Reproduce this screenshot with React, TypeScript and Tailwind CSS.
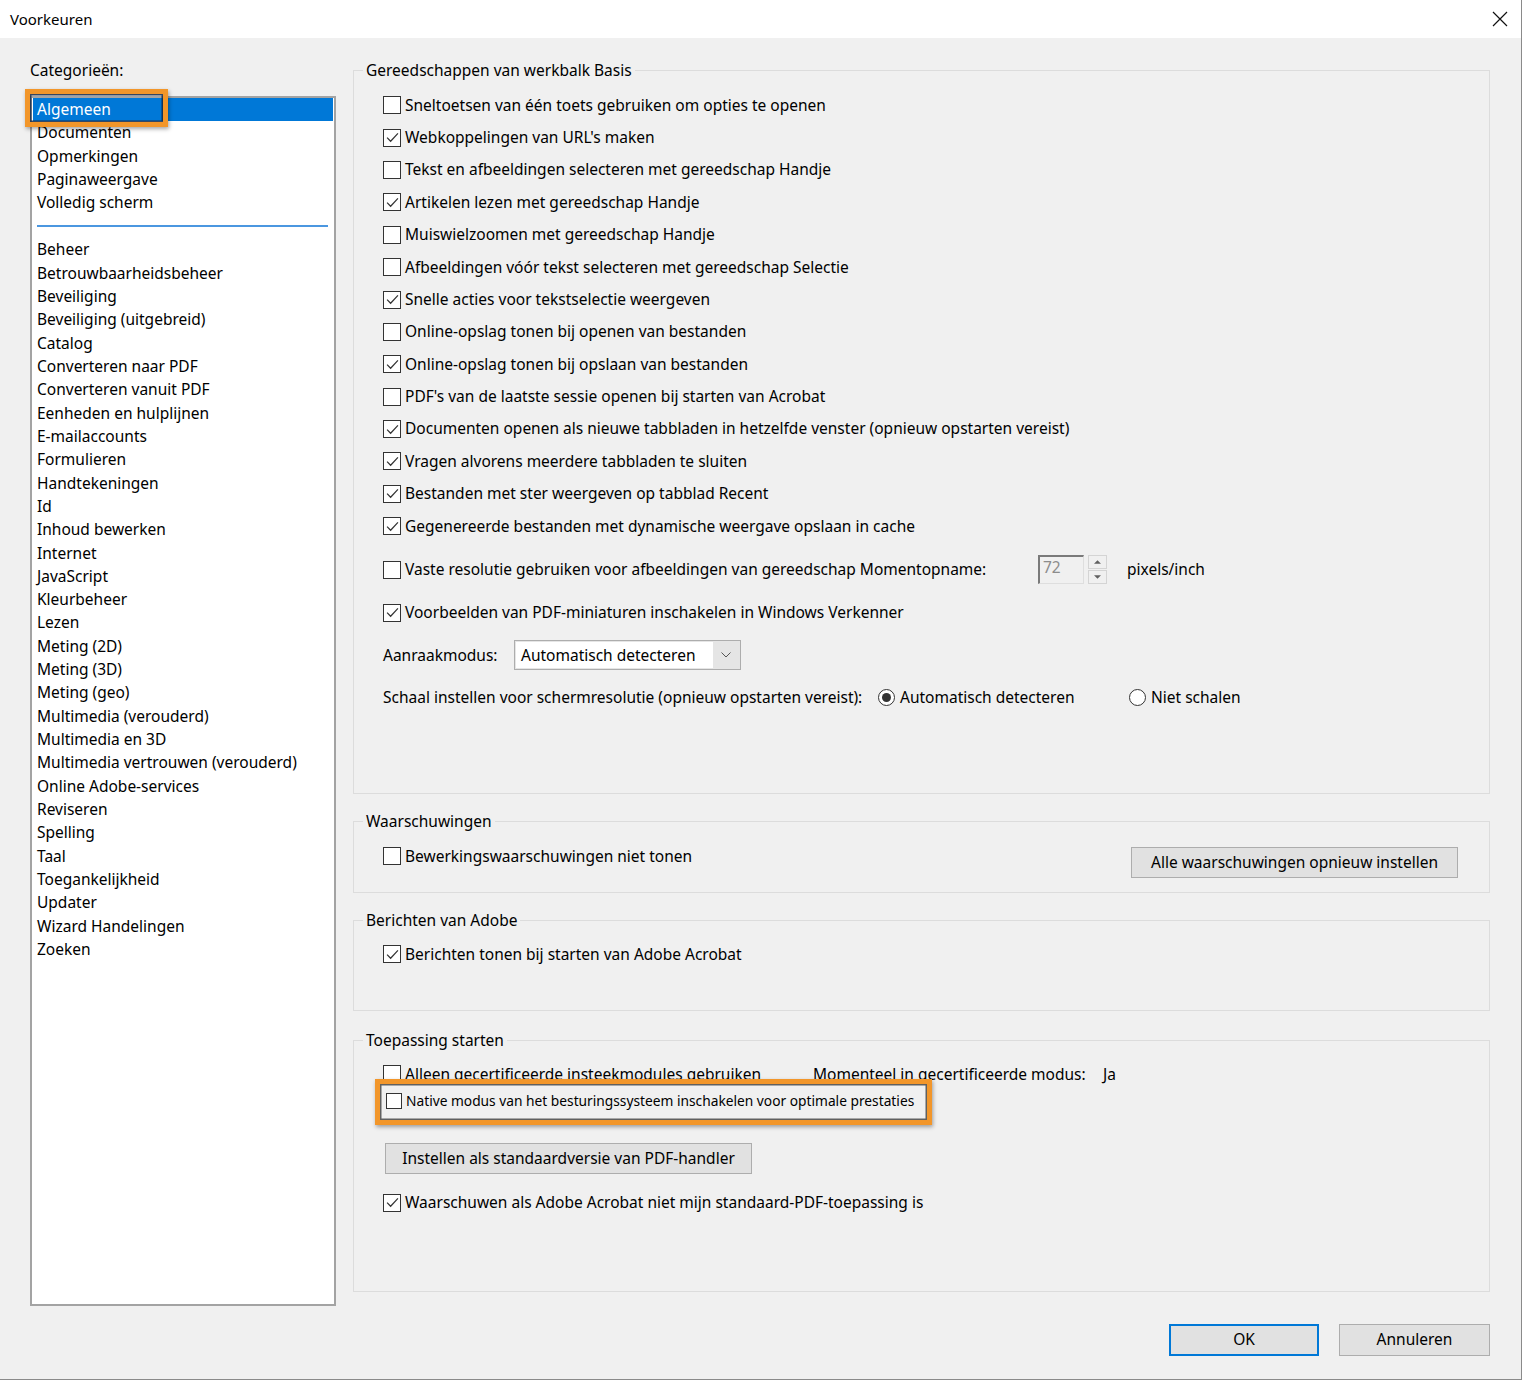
import React from "react";

const TOP_CATEGORIES = ["Algemeen", "Documenten", "Opmerkingen", "Paginaweergave", "Volledig scherm"];

const CATEGORIES = [
  "Beheer",
  "Betrouwbaarheidsbeheer",
  "Beveiliging",
  "Beveiliging (uitgebreid)",
  "Catalog",
  "Converteren naar PDF",
  "Converteren vanuit PDF",
  "Eenheden en hulplijnen",
  "E-mailaccounts",
  "Formulieren",
  "Handtekeningen",
  "Id",
  "Inhoud bewerken",
  "Internet",
  "JavaScript",
  "Kleurbeheer",
  "Lezen",
  "Meting (2D)",
  "Meting (3D)",
  "Meting (geo)",
  "Multimedia (verouderd)",
  "Multimedia en 3D",
  "Multimedia vertrouwen (verouderd)",
  "Online Adobe-services",
  "Reviseren",
  "Spelling",
  "Taal",
  "Toegankelijkheid",
  "Updater",
  "Wizard Handelingen",
  "Zoeken",
];

const BASIC_TOOLS: [string, boolean][] = [
  ["Sneltoetsen van één toets gebruiken om opties te openen", false],
  ["Webkoppelingen van URL's maken", true],
  ["Tekst en afbeeldingen selecteren met gereedschap Handje", false],
  ["Artikelen lezen met gereedschap Handje", true],
  ["Muiswielzoomen met gereedschap Handje", false],
  ["Afbeeldingen vóór tekst selecteren met gereedschap Selectie", false],
  ["Snelle acties voor tekstselectie weergeven", true],
  ["Online-opslag tonen bij openen van bestanden", false],
  ["Online-opslag tonen bij opslaan van bestanden", true],
  ["PDF's van de laatste sessie openen bij starten van Acrobat", false],
  ["Documenten openen als nieuwe tabbladen in hetzelfde venster (opnieuw opstarten vereist)", true],
  ["Vragen alvorens meerdere tabbladen te sluiten", true],
  ["Bestanden met ster weergeven op tabblad Recent", true],
  ["Gegenereerde bestanden met dynamische weergave opslaan in cache", true],
];

function CheckBox({ checked = false, small = false }: { checked?: boolean; small?: boolean }) {
  return (
    <span
      className={`${small ? "w-[16px] h-[16px]" : "w-[18px] h-[18px]"} shrink-0 border border-[#333] bg-white flex items-center justify-center`}
    >
      {checked && (
        <svg viewBox="0 0 16 16" className="w-[15px] h-[15px]">
          <path d="M2.2 8.2 L6 12 L13.8 3.6" fill="none" stroke="#333" strokeWidth="1.3" />
        </svg>
      )}
    </span>
  );
}

function CheckRow({ label, checked, className = "" }: { label: string; checked?: boolean; className?: string }) {
  return (
    <div className={`flex items-center gap-[4px] h-[32.4px] ${className}`}>
      <CheckBox checked={checked} />
      <span className="whitespace-nowrap">{label}</span>
    </div>
  );
}

function Radio({ selected = false, label }: { selected?: boolean; label: string }) {
  return (
    <div className="flex items-center gap-[5px]">
      <span className="w-[17px] h-[17px] rounded-full border border-[#333] bg-white flex items-center justify-center">
        {selected && <span className="w-[9px] h-[9px] rounded-full bg-[#333]" />}
      </span>
      <span className="whitespace-nowrap">{label}</span>
    </div>
  );
}

function Group({ title, className = "", children }: { title: string; className?: string; children: React.ReactNode }) {
  return (
    <fieldset className={`border border-[#dcdcdc] ${className}`}>
      <legend className="ml-[9px] px-[3px] leading-[22px]">{title}</legend>
      {children}
    </fieldset>
  );
}

function Button({ label, className = "" }: { label: string; className?: string }) {
  return (
    <div
      className={`h-[31px] flex items-center justify-center bg-[#e1e1e1] border border-[#adadad] whitespace-nowrap ${className}`}
    >
      {label}
    </div>
  );
}

export default function App() {
  return (
    <div className="relative w-[1524px] h-[1382px] overflow-hidden bg-white text-black text-[15.5px] font-['Noto_Sans','Segoe_UI',sans-serif]">
      <div className="w-[1522px] h-[1380px] flex flex-col border-r border-b border-[#8a8a8a]">
        {/* Title bar */}
        <div className="h-[38px] shrink-0 bg-white flex items-center justify-between pl-[10px] pr-[13px] text-[15px]">
          <span>Voorkeuren</span>
          <svg viewBox="0 0 16 16" className="w-[16px] h-[16px]">
            <path d="M1 1 L15 15 M15 1 L1 15" stroke="#111" strokeWidth="1.2" />
          </svg>
        </div>

        {/* Body */}
        <div className="flex-1 bg-[#f0f0f0] pt-[21px] pl-[30px] pr-[31px]">
          <div className="flex gap-[17px]">
            {/* Categories */}
            <div className="w-[306px] shrink-0 flex flex-col">
              <div className="leading-[22px]">Categorieën:</div>
              <div className="mt-[15px] h-[1210px] bg-white border-2 border-[#a3a3a3]">
                {TOP_CATEGORIES.map((c, i) =>
                  i === 0 ? (
                    <div key={c} className="mx-[1px] h-[23.33px] leading-[23.33px] pl-[4px] bg-[#0078d7] text-white">
                      {c}
                    </div>
                  ) : (
                    <div key={c} className="h-[23.33px] leading-[23.33px] pl-[5px]">
                      {c}
                    </div>
                  ),
                )}
                <div className="h-[23.6px] flex items-center pl-[5px] pr-[6px]">
                  <div className="h-[2px] w-full bg-[#4b97e0]" />
                </div>
                {CATEGORIES.map((c) => (
                  <div key={c} className="h-[23.33px] leading-[23.33px] pl-[5px] whitespace-nowrap">
                    {c}
                  </div>
                ))}
              </div>
            </div>

            {/* Settings */}
            <div className="w-[1137px] flex flex-col">
              <Group title="Gereedschappen van werkbalk Basis" className="h-[735px]">
                <div className="pt-[8px] pl-[29px]">
                  {BASIC_TOOLS.map(([label, checked]) => (
                    <CheckRow key={label} label={label} checked={checked} />
                  ))}
                  <div className="mt-[6px] h-[42.7px] flex items-center">
                    <CheckBox />
                    <span className="ml-[4px] w-[633px] whitespace-nowrap">
                      Vaste resolutie gebruiken voor afbeeldingen van gereedschap Momentopname:
                    </span>
                    <div className="w-[46px] h-[29px] bg-[#f0f0f0] border-t-2 border-l-2 border-[#7a7a7a] border-r border-b border-r-[#dedede] border-b-[#dedede] text-[#8c8c8c] pl-[3px] leading-[20px]">
                      72
                    </div>
                    <div className="ml-[4px] w-[19px] h-[29px] flex flex-col gap-[1px]">
                      <div className="flex-1 border border-[#d4d4d4] flex items-center justify-center">
                        <svg viewBox="0 0 8 4" className="w-[7px] h-[4px]">
                          <path d="M0 4 L4 0 L8 4 Z" fill="#606060" />
                        </svg>
                      </div>
                      <div className="flex-1 border border-[#d4d4d4] flex items-center justify-center">
                        <svg viewBox="0 0 8 4" className="w-[7px] h-[4px]">
                          <path d="M0 0 L4 4 L8 0 Z" fill="#606060" />
                        </svg>
                      </div>
                    </div>
                    <span className="ml-[20px]">pixels/inch</span>
                  </div>
                  <CheckRow
                    label="Voorbeelden van PDF-miniaturen inschakelen in Windows Verkenner"
                    checked
                    className="h-[42.7px]"
                  />
                  <div className="h-[42.7px] flex items-center">
                    <span className="w-[131px]">Aanraakmodus:</span>
                    <div className="w-[227px] h-[30px] border border-[#adadad] bg-[#e5e5e5] flex items-center p-[1px]">
                      <div className="w-[197px] h-full bg-white pl-[5px] leading-[26px]">Automatisch detecteren</div>
                      <div className="flex-1 flex items-center justify-center">
                        <svg viewBox="0 0 10 6" className="w-[10px] h-[6px]">
                          <path d="M0.5 0.5 L5 5 L9.5 0.5" fill="none" stroke="#555" strokeWidth="1" />
                        </svg>
                      </div>
                    </div>
                  </div>
                  <div className="h-[42.7px] flex items-center">
                    <span className="w-[495px] whitespace-nowrap">
                      Schaal instellen voor schermresolutie (opnieuw opstarten vereist):
                    </span>
                    <div className="w-[251px]">
                      <Radio selected label="Automatisch detecteren" />
                    </div>
                    <Radio label="Niet schalen" />
                  </div>
                </div>
              </Group>

              <Group title="Waarschuwingen" className="mt-[16px] h-[83px]">
                <div className="pt-[8px] pl-[29px] pr-[31px] flex items-start justify-between">
                  <CheckRow label="Bewerkingswaarschuwingen niet tonen" />
                  <Button label="Alle waarschuwingen opnieuw instellen" className="mt-[7px] w-[327px]" />
                </div>
              </Group>

              <Group title="Berichten van Adobe" className="mt-[16px] h-[102px]">
                <div className="pt-[7px] pl-[29px]">
                  <CheckRow label="Berichten tonen bij starten van Adobe Acrobat" checked />
                </div>
              </Group>

              <Group title="Toepassing starten" className="mt-[18px] h-[263px]">
                <div className="pt-[7px] pl-[29px]">
                  <div className="h-[32.4px] flex items-center">
                    <div className="w-[430px] flex items-center gap-[4px]">
                      <CheckBox />
                      <span className="whitespace-nowrap">Alleen gecertificeerde insteekmodules gebruiken</span>
                    </div>
                    <span className="w-[290px] whitespace-nowrap">Momenteel in gecertificeerde modus:</span>
                    <span>Ja</span>
                  </div>
                  <div className="h-[22px] flex items-center gap-[4px] pl-[3px] text-[13.75px]">
                    <CheckBox small />
                    <span className="whitespace-nowrap">
                      Native modus van het besturingssysteem inschakelen voor optimale prestaties
                    </span>
                  </div>
                  <Button label="Instellen als standaardversie van PDF-handler" className="mt-[31px] ml-[2px] w-[367px]" />
                  <CheckRow
                    label="Waarschuwen als Adobe Acrobat niet mijn standaard-PDF-toepassing is"
                    checked
                    className="mt-[12px]"
                  />
                </div>
              </Group>
            </div>
          </div>

          {/* Dialog buttons */}
          <div className="mt-[18px] flex justify-end gap-[20px]">
            <div className="w-[150px] h-[32px] flex items-center justify-center bg-[#e1e1e1] border-2 border-[#0078d7]">
              OK
            </div>
            <div className="w-[151px] h-[32px] flex items-center justify-center bg-[#e1e1e1] border border-[#adadad]">
              Annuleren
            </div>
          </div>
        </div>
      </div>

      {/* Highlight annotations */}
      <div className="absolute left-[25px] top-[89px] w-[143px] h-[38px] border-[5px] border-[#f2962a] shadow-[inset_0_0_0_1.5px_rgba(20,40,70,0.85),1px_2px_4px_rgba(0,0,0,0.35)]" />
      <div className="absolute left-[375px] top-[1079px] w-[557px] h-[46px] border-[5px] border-[#f2962a] shadow-[inset_0_0_0_1.5px_rgba(60,60,60,0.8),1px_2px_4px_rgba(0,0,0,0.35)]" />
    </div>
  );
}
